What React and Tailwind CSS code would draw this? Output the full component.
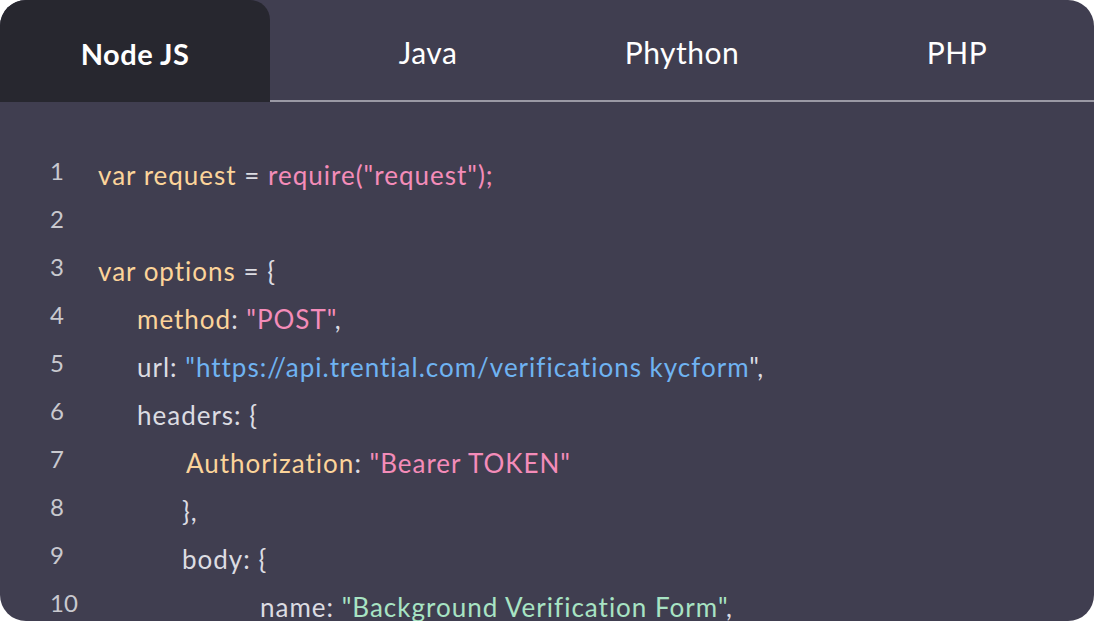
export default function App() {
    const Y = 'text-[#fcd49a]';
    const P = 'text-[#f48cb9]';
    const B = 'text-[#6fb3f2]';
    const G = 'text-[#a8e4c4]';
    const W = 'text-[#dcdce2]';
    const lines = [
        { pad: 'pl-0', parts: [[Y, 'var request '], [W, '= '], [P, 'require("request");']] },
        { pad: 'pl-0', parts: [] },
        { pad: 'pl-0', parts: [[Y, 'var options '], [W, '= {']] },
        { pad: 'pl-[39px]', parts: [[Y, 'method'], [W, ': '], [P, '"POST"'], [W, ',']] },
        { pad: 'pl-[39px]', parts: [[W, 'url: '], [B, '"https://api.trential.com/verifications kycform'], [W, '",']] },
        { pad: 'pl-[39px]', parts: [[W, 'headers: {']] },
        { pad: 'pl-[88px]', parts: [[Y, 'Authorization'], [W, ': '], [P, '"Bearer TOKEN"']] },
        { pad: 'pl-[84px]', parts: [[W, '},']] },
        { pad: 'pl-[84px]', parts: [[W, 'body: {']] },
        { pad: 'pl-[162px]', parts: [[W, 'name: '], [G, '"Background Verification Form"'], [W, ',']] },
    ];
    const tabs = [
        { name: 'Java', w: 'w-[316px]' },
        { name: 'Phython', w: 'w-[192px]' },
        { name: 'PHP', w: 'w-[316px] pl-[42px]' },
    ];
    return (
        <div className="w-[1094px] h-[623px] bg-white" style={{ fontFamily: '"Lato", "Noto Sans", sans-serif' }}>
            <div className="w-full h-[621px] bg-[#403e50] rounded-[26px] overflow-hidden">
                {/* tabs */}
                <div className="flex h-[102px] border-b-2 border-[#9a99a4]">
                    <div className="w-[270px] h-[102px] bg-[#27272f] rounded-tr-[20px] flex items-center justify-center pt-[6px] text-white text-[29px] font-bold tracking-[0.5px]">
                        Node JS
                    </div>
                    {tabs.map((t) => (
                        <div key={t.name} className={`${t.w} flex items-center justify-center pt-[4px] text-white text-[30px] tracking-[0.5px]`}>
                            {t.name}
                        </div>
                    ))}
                </div>

                {/* code */}
                <div className="pt-[49px]">
                    {lines.map((l, i) => (
                        <div key={i} className="flex h-[48px] items-center">
                            <div className="w-[98px] pl-[50px] text-[#c9c9cf] text-[24px] -mt-[8px]">{i + 1}</div>
                            <div className={`${l.pad} text-[26px] tracking-[1px] whitespace-pre`}>
                                {l.parts.map(([c, t], j) => (
                                    <span key={j} className={c}>{t}</span>
                                ))}
                            </div>
                        </div>
                    ))}
                </div>
            </div>
        </div>
    );
}
